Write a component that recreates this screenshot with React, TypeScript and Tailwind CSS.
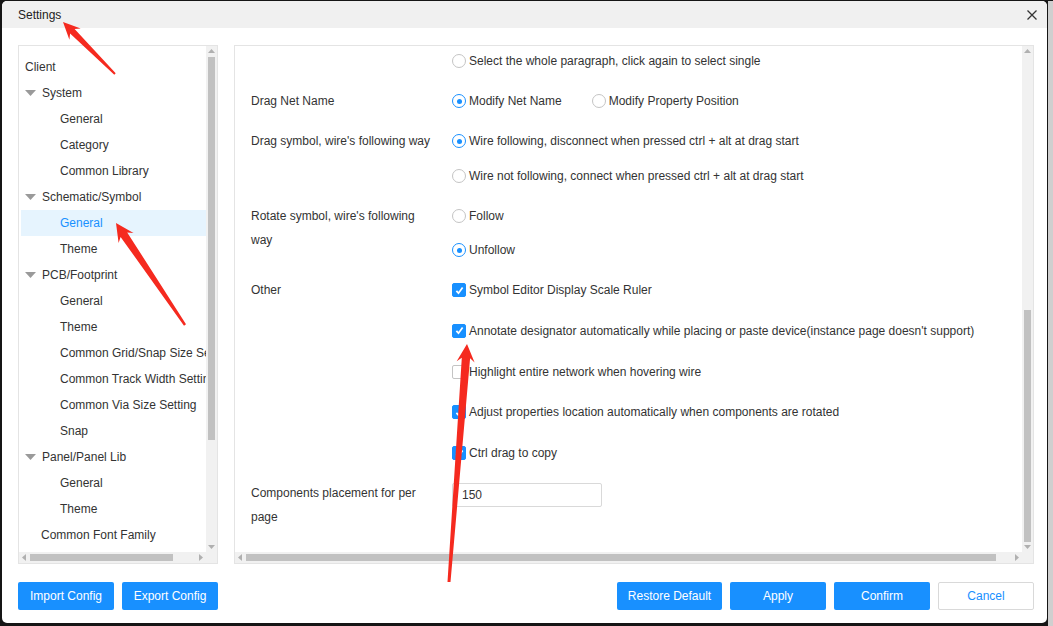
import React from 'react';

type TreeItem = { label: string; indent: string; caret?: boolean; selected?: boolean };

const tree: TreeItem[] = [
  { label: 'Client', indent: 'pl-[4px]' },
  { label: 'System', indent: 'pl-[4px]', caret: true },
  { label: 'General', indent: 'pl-[39px]' },
  { label: 'Category', indent: 'pl-[39px]' },
  { label: 'Common Library', indent: 'pl-[39px]' },
  { label: 'Schematic/Symbol', indent: 'pl-[4px]', caret: true },
  { label: 'General', indent: 'pl-[39px]', selected: true },
  { label: 'Theme', indent: 'pl-[39px]' },
  { label: 'PCB/Footprint', indent: 'pl-[4px]', caret: true },
  { label: 'General', indent: 'pl-[39px]' },
  { label: 'Theme', indent: 'pl-[39px]' },
  { label: 'Common Grid/Snap Size Setting', indent: 'pl-[39px]' },
  { label: 'Common Track Width Setting', indent: 'pl-[39px]' },
  { label: 'Common Via Size Setting', indent: 'pl-[39px]' },
  { label: 'Snap', indent: 'pl-[39px]' },
  { label: 'Panel/Panel Lib', indent: 'pl-[4px]', caret: true },
  { label: 'General', indent: 'pl-[39px]' },
  { label: 'Theme', indent: 'pl-[39px]' },
  { label: 'Common Font Family', indent: 'pl-[20px]' },
];

const Up = () => (
  <svg width="7" height="4" viewBox="0 0 7 4">
    <path d="M0 4 L3.5 0 L7 4Z" fill="#b0b0b0" />
  </svg>
);
const Down = () => (
  <svg width="7" height="4" viewBox="0 0 7 4">
    <path d="M0 0 L3.5 4 L7 0Z" fill="#b0b0b0" />
  </svg>
);
const Left = () => (
  <svg width="4" height="7" viewBox="0 0 4 7">
    <path d="M4 0 L0 3.5 L4 7Z" fill="#b0b0b0" />
  </svg>
);
const Right = () => (
  <svg width="4" height="7" viewBox="0 0 4 7">
    <path d="M0 0 L4 3.5 L0 7Z" fill="#b0b0b0" />
  </svg>
);

function Radio({ checked, label }: { checked?: boolean; label: string }) {
  return (
    <div className="flex h-5 items-center whitespace-nowrap">
      <span
        className={`mr-[3px] flex h-[14px] w-[14px] items-center justify-center rounded-full border bg-white ${
          checked ? 'border-[#1890ff]' : 'border-[#c4c4c4]'
        }`}
      >
        {checked && <span className="h-[5px] w-[5px] rounded-full bg-[#1890ff]" />}
      </span>
      {label}
    </div>
  );
}

function Checkbox({ checked, label }: { checked?: boolean; label: string }) {
  return (
    <div className="flex h-5 items-center whitespace-nowrap">
      <span
        className={`mr-[3px] flex h-[14px] w-[14px] items-center justify-center rounded-[2px] border ${
          checked ? 'border-[#1890ff] bg-[#1890ff]' : 'border-[#c4c4c4] bg-white'
        }`}
      >
        {checked && (
          <svg viewBox="0 0 12 12" className="h-[11px] w-[11px]">
            <path d="M2.6 6.4 L4.9 8.9 L9.4 2.8" stroke="white" strokeWidth="1.9" fill="none" />
          </svg>
        )}
      </span>
      {label}
    </div>
  );
}

function Row({ label, gap, children }: { label?: string; gap?: string; children: React.ReactNode }) {
  return (
    <div className="flex">
      <div className="-my-0.5 w-[201px] shrink-0 pr-[17px] leading-6">{label}</div>
      <div className={`flex flex-col ${gap ?? ''}`}>{children}</div>
    </div>
  );
}

function arrow(tx: number, ty: number, px: number, py: number, hl = 18, hw = 8.5, sw = 4, tw = 1.3) {
  const dx = px - tx;
  const dy = py - ty;
  const len = Math.hypot(dx, dy);
  const ux = dx / len;
  const uy = dy / len;
  const nx = -uy;
  const ny = ux;
  const bx = px - ux * hl;
  const by = py - uy * hl;
  const kx = px - ux * hl * 0.78;
  const ky = py - uy * hl * 0.78;
  const pts = [
    [px, py],
    [bx + nx * hw, by + ny * hw],
    [kx + nx * sw, ky + ny * sw],
    [tx + nx * tw, ty + ny * tw],
    [tx - nx * tw, ty - ny * tw],
    [kx - nx * sw, ky - ny * sw],
    [bx - nx * hw, by - ny * hw],
  ];
  return pts.map((p) => p.map((v) => v.toFixed(1)).join(',')).join(' ');
}

export default function App() {
  return (
    <div className="relative flex h-[626px] w-[1053px] overflow-hidden bg-[#151515] pl-[2px] pt-[1px] font-['Liberation_Sans',Arial,sans-serif] text-[12px] text-[#333]">
      <div className="flex h-[622px] w-[1045px] flex-col overflow-hidden rounded-[5px] bg-white">
        {/* header */}
        <div className="flex h-[27px] shrink-0 items-center justify-between bg-[#f0f0f0] pl-[16px] pr-[10px]">
          <span className="text-[#222]">Settings</span>
          <svg width="10" height="10" viewBox="0 0 10 10">
            <path d="M0.5 0.5 L9.5 9.5 M9.5 0.5 L0.5 9.5" stroke="#333" strokeWidth="1.3" />
          </svg>
        </div>

        {/* body */}
        <div className="flex gap-4 pl-[16px] pr-[13px] pt-[17px]">
          {/* tree panel */}
          <div className="flex h-[519px] w-[200px] shrink-0 flex-col border border-[#e4e4e4]">
            <div className="flex min-h-0 flex-1">
              <div className="min-w-0 flex-1 overflow-hidden pl-[2px] pt-[8px]">
                {tree.map((item, i) => (
                  <div
                    key={i}
                    className={`flex h-[26px] items-center whitespace-nowrap ${item.indent} ${
                      item.selected ? 'bg-[#e6f4fe] text-[#1890ff]' : ''
                    }`}
                  >
                    {item.caret && (
                      <svg width="11" height="6" viewBox="0 0 11 6" className="mr-[6px] shrink-0">
                        <path d="M0 0 L11 0 L5.5 6Z" fill="#9a9a9a" />
                      </svg>
                    )}
                    {item.label}
                  </div>
                ))}
              </div>
              <div className="flex w-[11px] shrink-0 flex-col items-center bg-[#f1f1f1]">
                <div className="flex h-[10px] items-center">
                  <Up />
                </div>
                <div className="mt-[1px] h-[383px] w-[7px] bg-[#c1c1c1]" />
                <div className="flex-1" />
                <div className="flex h-[10px] items-center">
                  <Down />
                </div>
              </div>
            </div>
            <div className="flex h-[11px] shrink-0 items-center bg-[#f1f1f1]">
              <div className="flex w-[10px] justify-center">
                <Left />
              </div>
              <div className="ml-[1px] h-[7px] w-[143px] bg-[#c1c1c1]" />
              <div className="flex-1" />
              <div className="flex w-[10px] justify-center">
                <Right />
              </div>
              <div className="w-[11px]" />
            </div>
          </div>

          {/* settings panel */}
          <div className="flex h-[519px] min-w-0 flex-1 flex-col border border-[#e4e4e4]">
            <div className="flex min-h-0 flex-1">
              <div className="flex min-w-0 flex-1 flex-col gap-5 overflow-hidden pl-4 pt-[5px]">
                <Row>
                  <Radio label="Select the whole paragraph, click again to select single" />
                </Row>
                <Row label="Drag Net Name">
                  <div className="flex gap-[30px]">
                    <Radio checked label="Modify Net Name" />
                    <Radio label="Modify Property Position" />
                  </div>
                </Row>
                <Row label="Drag symbol, wire's following way" gap="gap-[15px]">
                  <Radio checked label="Wire following, disconnect when pressed ctrl + alt at drag start" />
                  <Radio label="Wire not following, connect when pressed ctrl + alt at drag start" />
                </Row>
                <Row label="Rotate symbol, wire's following way" gap="gap-[14px]">
                  <Radio label="Follow" />
                  <Radio checked label="Unfollow" />
                </Row>
                <Row label="Other" gap="gap-[20.75px]">
                  <Checkbox checked label="Symbol Editor Display Scale Ruler" />
                  <Checkbox
                    checked
                    label="Annotate designator automatically while placing or paste device(instance page doesn't support)"
                  />
                  <Checkbox label="Highlight entire network when hovering wire" />
                  <Checkbox checked label="Adjust properties location automatically when components are rotated" />
                  <Checkbox checked label="Ctrl drag to copy" />
                </Row>
                <Row label="Components placement for per page">
                  <input
                    defaultValue="150"
                    className="h-[24px] w-[150px] rounded-[2px] border border-[#d9d9d9] pl-[9px] text-[12px] text-[#333] outline-none"
                  />
                </Row>
              </div>
              <div className="flex w-[11px] shrink-0 flex-col items-center bg-[#f1f1f1]">
                <div className="flex h-[10px] items-center">
                  <Up />
                </div>
                <div className="mt-[254px] h-[232px] w-[7px] bg-[#c1c1c1]" />
                <div className="flex-1" />
                <div className="flex h-[10px] items-center">
                  <Down />
                </div>
              </div>
            </div>
            <div className="flex h-[11px] shrink-0 items-center bg-[#f1f1f1]">
              <div className="flex w-[10px] justify-center">
                <Left />
              </div>
              <div className="ml-[1px] h-[7px] w-[750px] bg-[#c1c1c1]" />
              <div className="flex-1" />
              <div className="flex w-[10px] justify-center">
                <Right />
              </div>
              <div className="w-[11px]" />
            </div>
          </div>
        </div>

        {/* footer */}
        <div className="flex justify-between pl-[16px] pr-[13px] pt-[18px]">
          <div className="flex gap-2">
            <button className="h-[28px] w-[96px] rounded-[2px] bg-[#1890ff] text-white">Import Config</button>
            <button className="h-[28px] w-[96px] rounded-[2px] bg-[#1890ff] text-white">Export Config</button>
          </div>
          <div className="flex gap-2">
            <button className="h-[28px] w-[105px] rounded-[2px] bg-[#1890ff] text-white">Restore Default</button>
            <button className="h-[28px] w-[96px] rounded-[2px] bg-[#1890ff] text-white">Apply</button>
            <button className="h-[28px] w-[96px] rounded-[2px] bg-[#1890ff] text-white">Confirm</button>
            <button className="h-[28px] w-[96px] rounded-[2px] border border-[#d9d9d9] bg-white text-[#1890ff]">
              Cancel
            </button>
          </div>
        </div>
      </div>
      <div className="ml-[1px] h-full flex-1 bg-[#cfcfcf]" />

      {/* annotation arrows */}
      <svg className="pointer-events-none absolute inset-0" width="1053" height="626">
        <polygon points={arrow(115, 74, 63, 22, 17, 8, 3.2, 1)} fill="#f52a1f" />
        <polygon points={arrow(185, 325, 116, 223, 18, 9, 4, 1.2)} fill="#f52a1f" />
        <polygon points={arrow(449, 582, 467, 344, 18, 9, 4.2, 1.5)} fill="#f52a1f" />
      </svg>
    </div>
  );
}
